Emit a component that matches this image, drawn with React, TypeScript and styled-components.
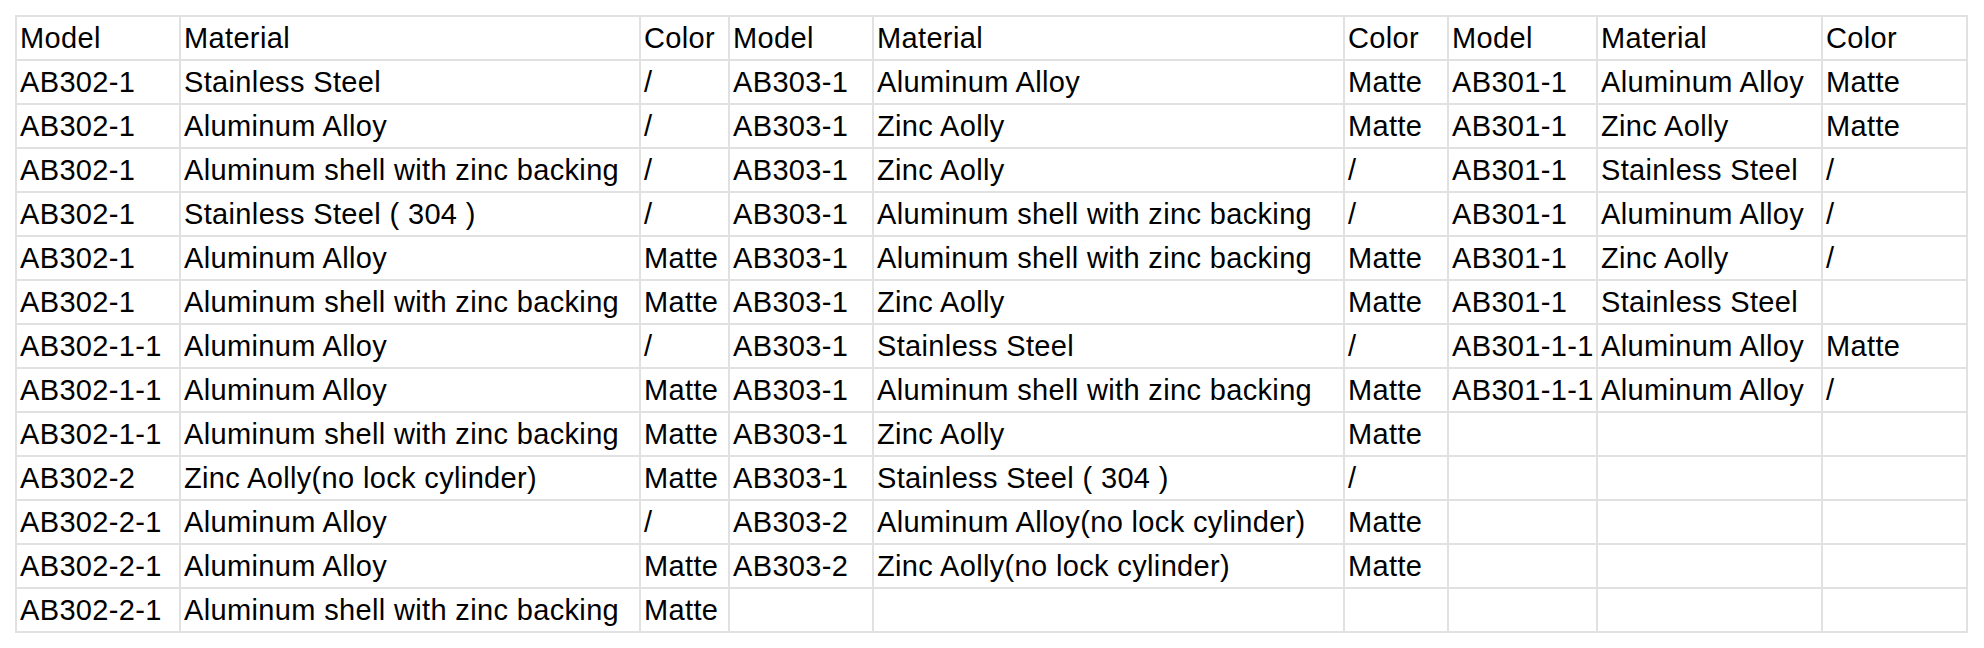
import React from "react";
import styled, { createGlobalStyle } from "styled-components";

const GlobalStyle = createGlobalStyle`
  html, body {
    margin: 0;
    padding: 0;
    background: #ffffff;
  }
  body {
    font-family: "Liberation Sans", Arial, "Noto Sans CJK SC", sans-serif;
  }
`;

const Page = styled.div`
  padding: 15px 0 0 15px;
  background: #ffffff;
`;

const COLS = [164, 460, 89, 144, 471, 104, 149, 225, 145];

const Sheet = styled.div`
  display: grid;
  grid-template-columns: ${COLS.map((c) => `${c}px`).join(" ")};
  grid-auto-rows: 44px;
  width: max-content;
  border-top: 2px solid #e1e1e1;
  border-left: 2px solid #e1e1e1;
`;

const Cell = styled.div`
  box-sizing: border-box;
  border-right: 2px solid #e1e1e1;
  border-bottom: 2px solid #e1e1e1;
  padding-left: 3px;
  display: flex;
  align-items: center;
  font-family: "Liberation Sans", Arial, "Noto Sans CJK SC", sans-serif;
  font-size: 29px;
  letter-spacing: 0.35px;
  line-height: 42px;
  color: #000000;
  white-space: pre;
  overflow: visible;
`;

type Row = [string, string, string];

const SS304 = "Stainless Steel ( 304 )";

const group1: Row[] = [
  ["AB302-1", "Stainless Steel", "/"],
  ["AB302-1", "Aluminum Alloy", "/"],
  ["AB302-1", "Aluminum shell with zinc backing", "/"],
  ["AB302-1", SS304, "/"],
  ["AB302-1", "Aluminum Alloy", "Matte"],
  ["AB302-1", "Aluminum shell with zinc backing", "Matte"],
  ["AB302-1-1", "Aluminum Alloy", "/"],
  ["AB302-1-1", "Aluminum Alloy", "Matte"],
  ["AB302-1-1", "Aluminum shell with zinc backing", "Matte"],
  ["AB302-2", "Zinc Aolly(no lock cylinder)", "Matte"],
  ["AB302-2-1", "Aluminum Alloy", "/"],
  ["AB302-2-1", "Aluminum Alloy", "Matte"],
  ["AB302-2-1", "Aluminum shell with zinc backing", "Matte"],
];

const group2: Row[] = [
  ["AB303-1", "Aluminum Alloy", "Matte"],
  ["AB303-1", "Zinc Aolly", "Matte"],
  ["AB303-1", "Zinc Aolly", "/"],
  ["AB303-1", "Aluminum shell with zinc backing", "/"],
  ["AB303-1", "Aluminum shell with zinc backing", "Matte"],
  ["AB303-1", "Zinc Aolly", "Matte"],
  ["AB303-1", "Stainless Steel", "/"],
  ["AB303-1", "Aluminum shell with zinc backing", "Matte"],
  ["AB303-1", "Zinc Aolly", "Matte"],
  ["AB303-1", SS304, "/"],
  ["AB303-2", "Aluminum Alloy(no lock cylinder)", "Matte"],
  ["AB303-2", "Zinc Aolly(no lock cylinder)", "Matte"],
  ["", "", ""],
];

const group3: Row[] = [
  ["AB301-1", "Aluminum Alloy", "Matte"],
  ["AB301-1", "Zinc Aolly", "Matte"],
  ["AB301-1", "Stainless Steel", "/"],
  ["AB301-1", "Aluminum Alloy", "/"],
  ["AB301-1", "Zinc Aolly", "/"],
  ["AB301-1", "Stainless Steel", ""],
  ["AB301-1-1", "Aluminum Alloy", "Matte"],
  ["AB301-1-1", "Aluminum Alloy", "/"],
  ["", "", ""],
  ["", "", ""],
  ["", "", ""],
  ["", "", ""],
  ["", "", ""],
];

const header: Row = ["Model", "Material", "Color"];

export default function App() {
  const rows: string[][] = [[...header, ...header, ...header]];
  for (let i = 0; i < group1.length; i++) {
    rows.push([...group1[i], ...group2[i], ...group3[i]]);
  }
  return (
    <>
      <GlobalStyle />
      <Page>
        <Sheet>
          {rows.map((r, ri) =>
            r.map((v, ci) => <Cell key={`${ri}-${ci}`}>{v}</Cell>)
          )}
        </Sheet>
      </Page>
    </>
  );
}
